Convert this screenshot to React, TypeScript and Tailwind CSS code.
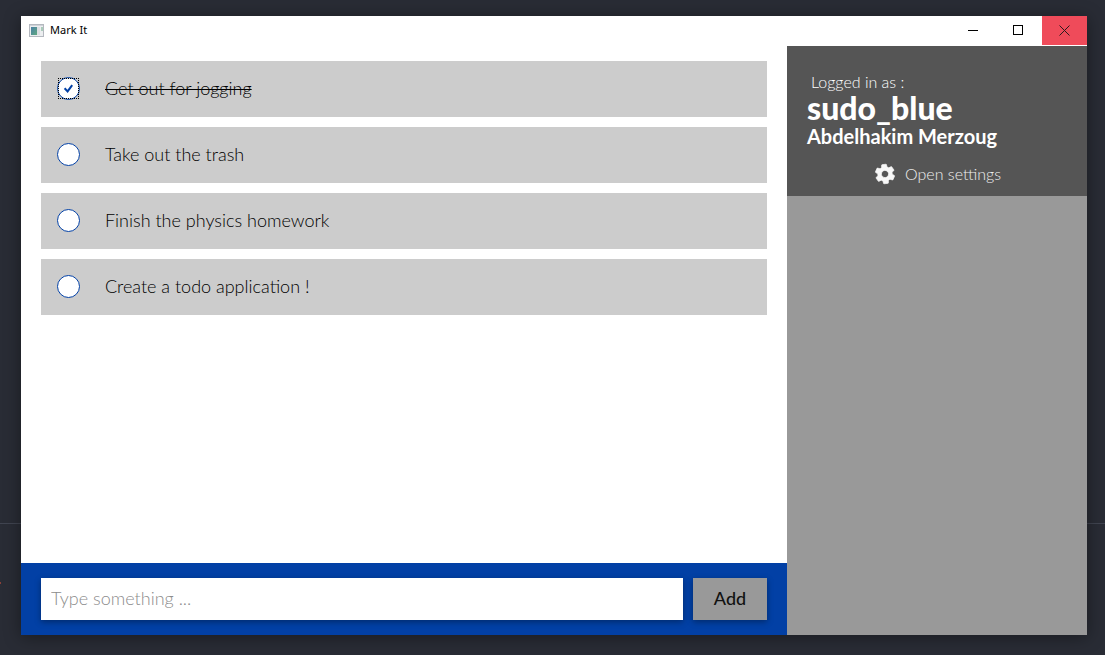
import { useState } from "react";
import type { FormEvent } from "react";

type Todo = { id: number; title: string; done: boolean };

const initialTodos: Todo[] = [
  { id: 1, title: "Get out for jogging", done: true },
  { id: 2, title: "Take out the trash", done: false },
  { id: 3, title: "Finish the physics homework", done: false },
  { id: 4, title: "Create a todo application !", done: false },
];

function AppIcon() {
  return (
    <svg width="15" height="13" viewBox="0 0 15 13" aria-hidden="true" className="mb-px">
      <defs>
        <linearGradient id="pane" x1="0" y1="0" x2="1" y2="1">
          <stop offset="0" stopColor="#4a7fa5" />
          <stop offset="1" stopColor="#5fa880" />
        </linearGradient>
      </defs>
      <rect x="0.5" y="0.5" width="14" height="12" fill="#eceef0" stroke="#b4b8bf" />
      <rect x="1" y="1" width="13" height="1" fill="#cfd3d8" />
      <rect x="2" y="3" width="6" height="8" fill="url(#pane)" />
      <rect x="8" y="3" width="3" height="8" fill="#dcdee2" />
      <rect x="12" y="3" width="2" height="4" fill="#a9cbb9" />
    </svg>
  );
}

function TitleBar() {
  return (
    <header className="flex h-[30px] items-start bg-white">
      <div className="flex h-[29px] flex-1 items-center gap-1.5 pl-2">
        <AppIcon />
        <h1 className="font-['Noto_Sans',sans-serif] text-[11px] text-black">Mark It</h1>
      </div>
      <button type="button" aria-label="Minimize" className="grid h-[29px] w-[45px] place-items-center pr-0.5">
        <svg width="11" height="11" viewBox="0 0 11 11" shapeRendering="crispEdges">
          <path d="M0 5.5H10" stroke="#000" />
        </svg>
      </button>
      <button type="button" aria-label="Maximize" className="grid h-[29px] w-[45px] place-items-center pr-0.5">
        <svg width="11" height="11" viewBox="0 0 11 11" shapeRendering="crispEdges">
          <rect x="0.5" y="0.5" width="9" height="9" fill="none" stroke="#000" />
        </svg>
      </button>
      <button type="button" aria-label="Close" className="grid h-[29px] w-[45px] place-items-center bg-[#ef4b5a]">
        <svg width="11" height="11" viewBox="0 0 11 11">
          <path d="M0.5 0.5L10.5 10.5M10.5 0.5L0.5 10.5" stroke="#2a1a1c" />
        </svg>
      </button>
    </header>
  );
}

function TodoRow({ todo, onToggle }: { todo: Todo; onToggle: () => void }) {
  return (
    <li>
      <label className="flex h-14 items-center gap-[25px] bg-[#ccc] px-4 pb-0.5">
        <span className="relative grid size-[23px] place-items-center">
          <input
            type="checkbox"
            checked={todo.done}
            onChange={onToggle}
            className="col-start-1 row-start-1 size-[23px] appearance-none rounded-full border border-[#0240a5] bg-white outline-none"
          />
          {todo.done && (
            <>
              <svg width="11" height="11" viewBox="0 0 11 11" aria-hidden="true" className="pointer-events-none col-start-1 row-start-1">
                <path d="M1.6 5.2L4.6 8.4L9.2 2.2" fill="none" stroke="#0240a5" strokeWidth="2" />
              </svg>
              <span className="pointer-events-none absolute inset-px border border-dotted border-black" />
            </>
          )}
        </span>
        <span className={`text-lg font-light text-black ${todo.done ? "line-through decoration-1" : ""}`}>{todo.title}</span>
      </label>
    </li>
  );
}

function GearIcon() {
  return (
    <svg width="24" height="24" viewBox="0 0 24 24" fill="#f7f7f7" aria-hidden="true">
      <path
        transform="rotate(-6 12 12)"
        stroke="#f7f7f7"
        strokeWidth="0.7"
        strokeLinejoin="round"
        d="M19.14 12.94c.04-.3.06-.61.06-.94 0-.32-.02-.64-.07-.94l2.03-1.58c.18-.14.23-.41.12-.61l-1.92-3.32c-.12-.22-.37-.29-.59-.22l-2.39.96c-.5-.38-1.03-.7-1.62-.94l-.36-2.54c-.04-.24-.24-.41-.48-.41h-3.84c-.24 0-.43.17-.47.41l-.36 2.54c-.59.24-1.13.57-1.62.94l-2.39-.96c-.22-.08-.47 0-.59.22L2.74 8.87c-.12.21-.08.47.12.61l2.03 1.58c-.05.3-.09.63-.09.94s.02.64.07.94l-2.03 1.58c-.18.14-.23.41-.12.61l1.92 3.32c.12.22.37.29.59.22l2.39-.96c.5.38 1.03.7 1.62.94l.36 2.54c.05.24.24.41.48.41h3.84c.24 0 .44-.17.47-.41l.36-2.54c.59-.24 1.13-.56 1.62-.94l2.39.96c.22.08.47 0 .59-.22l1.92-3.32c.12-.22.07-.47-.12-.61l-2.01-1.58zM12 15.6c-1.98 0-3.6-1.62-3.6-3.6s1.62-3.6 3.6-3.6 3.6 1.62 3.6 3.6-1.62 3.6-3.6 3.6z"
      />
    </svg>
  );
}

function Sidebar() {
  return (
    <aside className="w-[300px] shrink-0 bg-[#999]">
      <section className="flex h-[150px] flex-col bg-[#555] px-5 pt-[26px] text-white">
        <p className="pl-1 text-base leading-5 font-light">Logged in as :</p>
        <p className="text-[32px] leading-8 font-black">sudo_blue</p>
        <p className="text-xl leading-6 font-bold">Abdelhakim Merzoug</p>
        <button type="button" className="mt-3.5 flex h-6 items-center gap-2 self-center pb-px text-base font-light text-[#eee]">
          <GearIcon />
          Open settings
        </button>
      </section>
    </aside>
  );
}

export default function App() {
  const [todos, setTodos] = useState(initialTodos);
  const [draft, setDraft] = useState("");

  const toggle = (id: number) =>
    setTodos((list) => list.map((t) => (t.id === id ? { ...t, done: !t.done } : t)));

  const add = (event: FormEvent) => {
    event.preventDefault();
    if (!draft.trim()) return;
    setTodos((list) => [...list, { id: Date.now(), title: draft.trim(), done: false }]);
    setDraft("");
  };

  return (
    <div className="relative flex min-h-screen bg-[#292c35] pt-4 pr-[18px] pb-5 pl-[21px] font-['Lato',sans-serif]">
      <div className="absolute inset-x-0 bottom-[131px] h-px bg-[#404450]" />
      <div className="absolute bottom-[71px] left-0 h-[2px] w-px bg-[#8a4038]" />
      <div className="relative flex flex-1 flex-col bg-white shadow-[0_2px_16px_rgba(0,0,0,0.4)]">
        <TitleBar />
        <div className="flex flex-1">
          <main className="flex min-w-0 flex-1 flex-col">
            <ul className="flex flex-1 flex-col gap-2.5 px-5 py-[15px]">
              {todos.map((todo) => (
                <TodoRow key={todo.id} todo={todo} onToggle={() => toggle(todo.id)} />
              ))}
            </ul>
            <form onSubmit={add} className="flex h-[72px] items-center gap-2.5 bg-[#0240a5] px-5">
              <input
                type="text"
                aria-label="New task"
                placeholder="Type something ..."
                value={draft}
                onChange={(e) => setDraft(e.target.value)}
                className="h-[42px] min-w-0 flex-1 bg-white px-2.5 pb-0.5 text-lg font-light text-black shadow-[0_2px_6px_rgba(0,0,0,0.35)] outline-none placeholder:text-[#8c8c8c]"
              />
              <button type="submit" className="h-[42px] w-[74px] bg-[#999] pb-0.5 text-lg font-medium text-[#111] shadow-[0_2px_6px_rgba(0,0,0,0.35)]">
                Add
              </button>
            </form>
          </main>
          <Sidebar />
        </div>
      </div>
    </div>
  );
}
